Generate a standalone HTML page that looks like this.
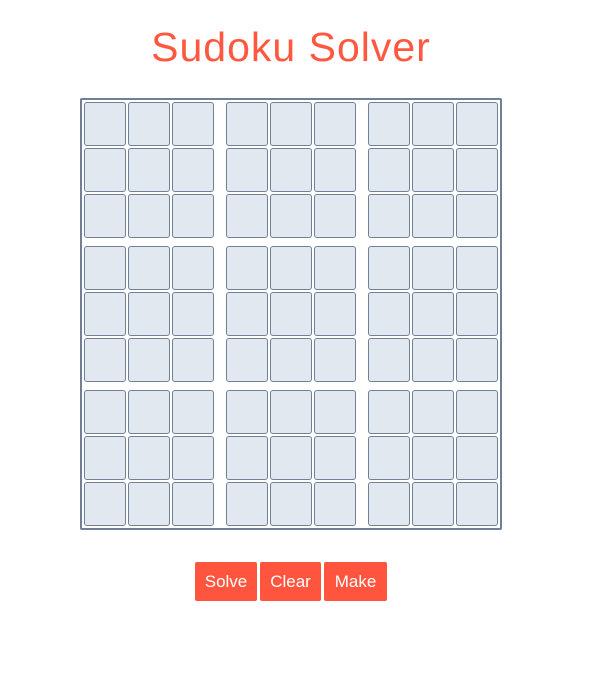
<!DOCTYPE html>
<html><head><meta charset="utf-8"><style>
body{margin:0;width:608px;height:678px;background:#fff;font-family:"Liberation Sans",sans-serif;position:relative;overflow:hidden}
h1{position:absolute;left:0;width:582px;top:22px;margin:0;text-align:center;font-weight:400;font-size:41px;letter-spacing:1px;color:#ff5840;line-height:50px}
#g{position:absolute;left:80px;top:98px;width:418px;height:428px;border:2px solid #718096;border-radius:2px}
.c{position:absolute;width:40px;height:42px;border:1px solid #718096;border-radius:3px;background:#e2e8f0}
.b{position:absolute;top:562px;height:39px;background:#ff543e;color:#fff;font-size:17px;line-height:39px;text-align:center;border-radius:2px}
</style></head><body>
<h1>Sudoku Solver</h1>
<div id="g"></div>
<div class="b" style="left:195px;width:62px">Solve</div>
<div class="b" style="left:260px;width:61px">Clear</div>
<div class="b" style="left:324px;width:63px">Make</div>
<script>
var xs=[84,128,172,226,270,314,368,412,456],ys=[102,148,194,246,292,338,390,436,482],h='';
for(var r=0;r<9;r++)for(var c=0;c<9;c++)h+='<div class="c" style="left:'+xs[c]+'px;top:'+ys[r]+'px"></div>';
document.body.insertAdjacentHTML('beforeend',h);
</script>
</body></html>
